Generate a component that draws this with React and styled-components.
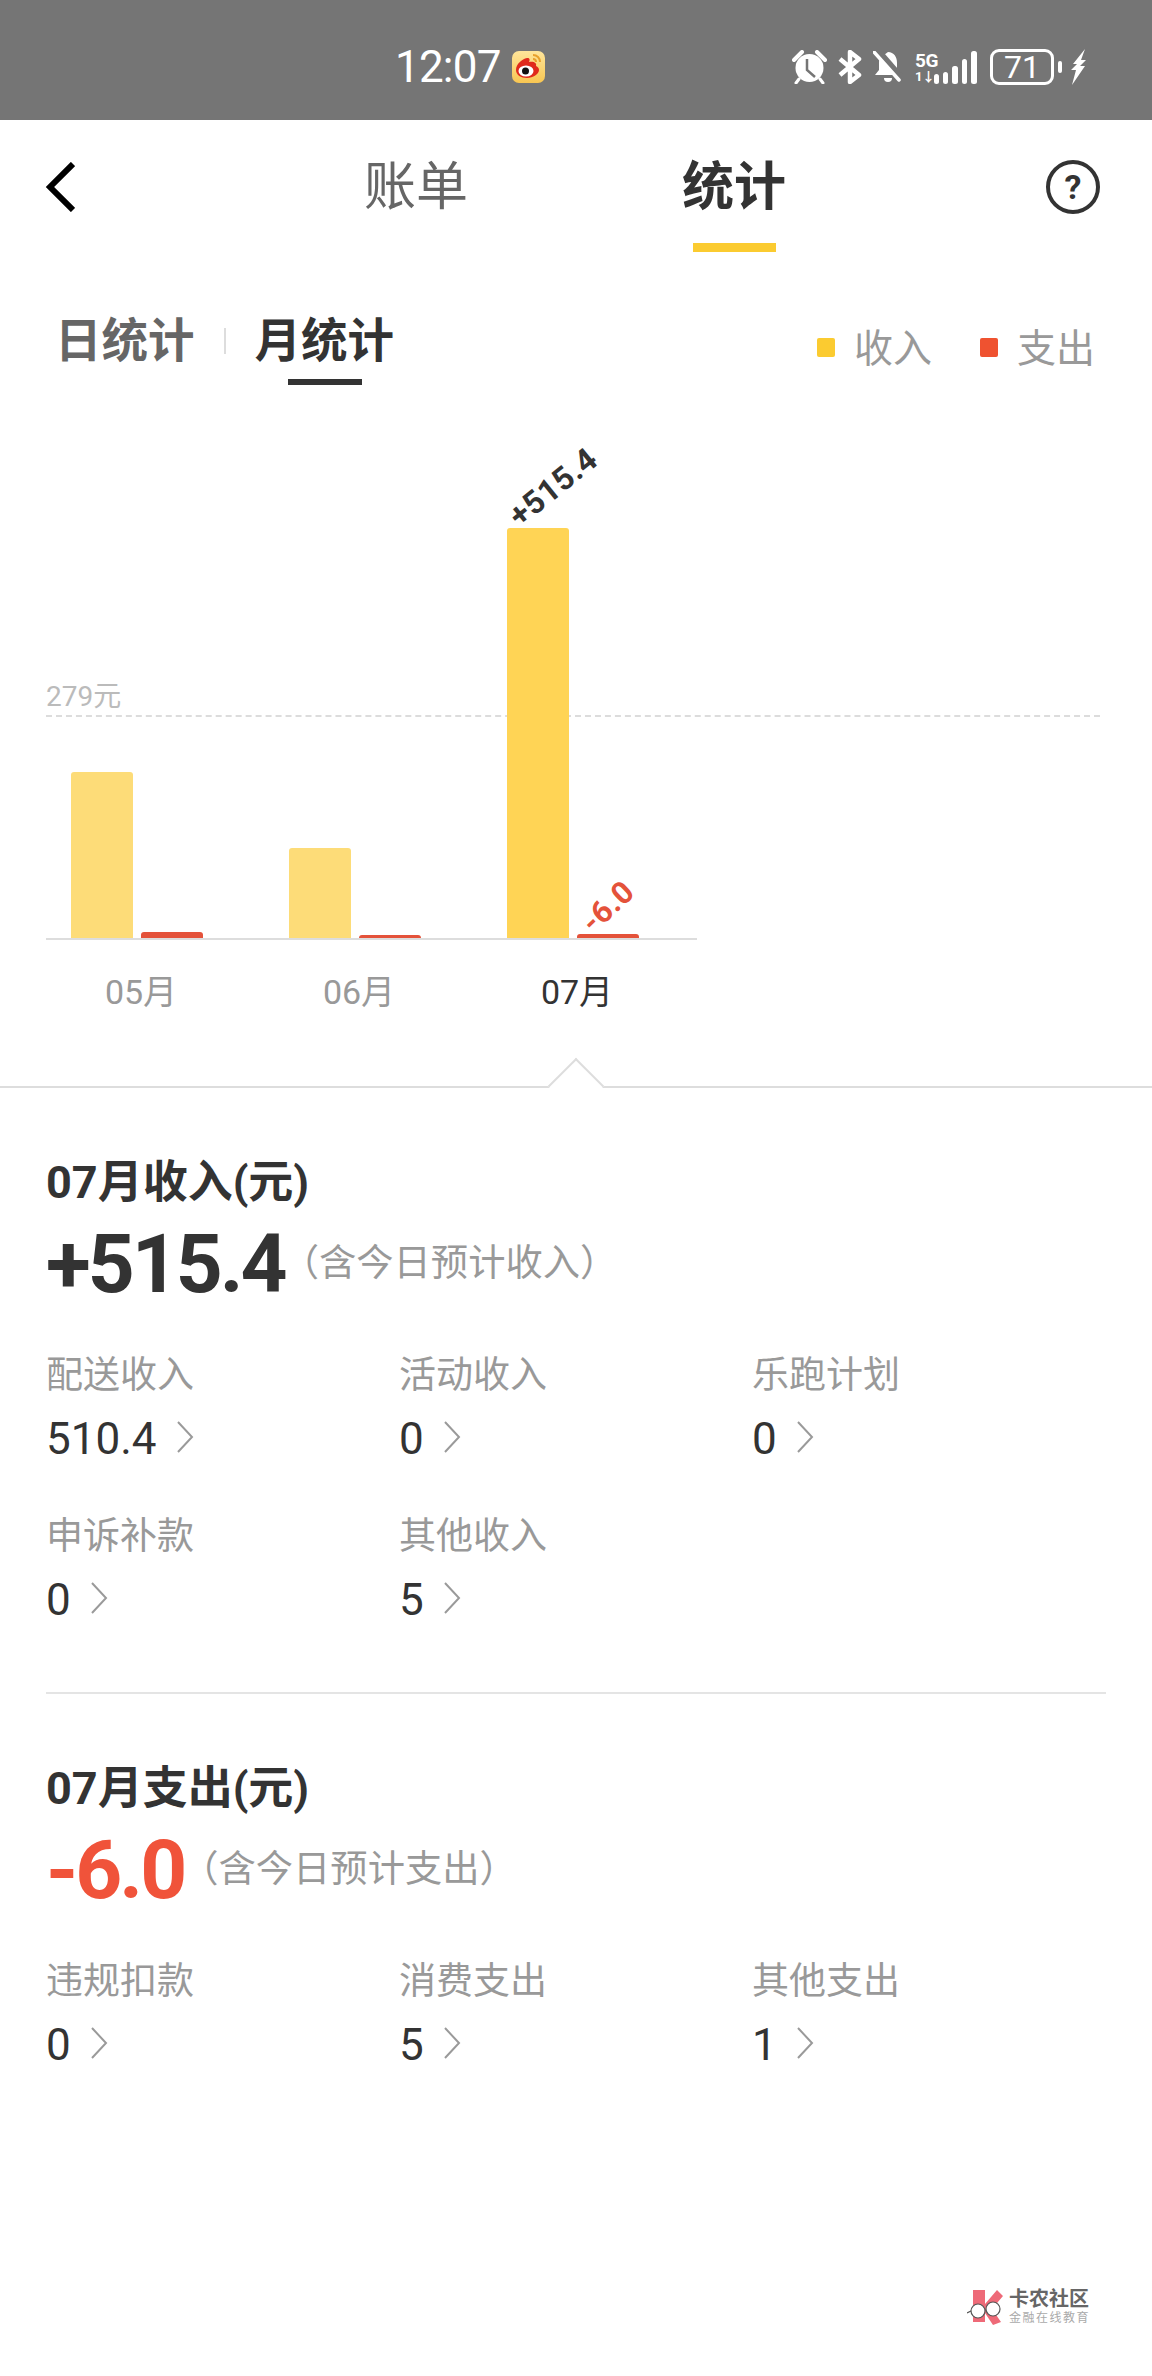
import styled, { createGlobalStyle } from "styled-components";

const GlobalStyle = createGlobalStyle`
  html, body {
    margin: 0;
    padding: 0;
    background: #fff;
  }
  body {
    font-family: Roboto, "Noto Sans CJK SC", sans-serif;
    color: #333;
  }
`;

const months = [
  { name: "05月", income: 166, expense: 6 },
  { name: "06月", income: 90, expense: 3 },
  { name: "07月", income: 410, expense: 4, active: true },
];

const incomeItems = [
  { label: "配送收入", value: "510.4" },
  { label: "活动收入", value: "0" },
  { label: "乐跑计划", value: "0" },
  { label: "申诉补款", value: "0" },
  { label: "其他收入", value: "5" },
];

const expenseItems = [
  { label: "违规扣款", value: "0" },
  { label: "消费支出", value: "5" },
  { label: "其他支出", value: "1" },
];

const Arrow = () => (
  <ArrowIcon viewBox="0 0 18 34" fill="none" stroke="#9a9a9a" strokeWidth="2">
    <path d="M2 2l14 15L2 32" />
  </ArrowIcon>
);

const Stats = ({ items }) => (
  <StatGrid>
    {items.map((item) => (
      <div key={item.label}>
        <StatLabel>{item.label}</StatLabel>
        <StatValue>
          {item.value}
          <Arrow />
        </StatValue>
      </div>
    ))}
  </StatGrid>
);

const StatusIcons = () => (
  <StatusRight>
    {/* alarm */}
    <svg width="35" height="34" viewBox="0 0 35 34" fill="#fff">
      <circle cx="17.5" cy="18" r="14" />
      <path d="M2 10L10 2" fill="none" stroke="#fff" strokeWidth="4" strokeLinecap="round" />
      <path d="M33 10L25 2" fill="none" stroke="#fff" strokeWidth="4" strokeLinecap="round" />
      <path d="M7 29l-3 4M28 29l3 4" stroke="#fff" strokeWidth="3" strokeLinecap="round" />
      <path d="M15 9v11l8 7" fill="none" stroke="#757575" strokeWidth="2.5" />
    </svg>
    {/* bluetooth */}
    <svg width="26" height="34" viewBox="0 0 26 34" fill="none" stroke="#fff">
      <path d="M3 9l19 16-9 7V2l9 7L3 25" strokeWidth="4.5" strokeLinejoin="round" />
    </svg>
    {/* bell off */}
    <svg width="30" height="32" viewBox="0 0 30 32" fill="#fff">
      <path d="M15 1c6 0 9 5 9 11v7l4 5H2l4-5v-7c0-2 0-3 1-5z" />
      <path d="M11 27h8a4 4 0 0 1-8 0z" />
      <path d="M3 -2l26 30" stroke="#757575" strokeWidth="7" />
      <path d="M1 1l25 28" stroke="#fff" strokeWidth="3.5" strokeLinecap="round" />
    </svg>
    <SignalBox>
      <NetText>
        <span>5G</span>
        <small>1↓</small>
      </NetText>
      <svg width="43" height="33" viewBox="0 0 43 33" fill="#fff">
        <rect x="0" y="23" width="5" height="10" rx="2.5" />
        <rect x="9" y="21" width="5" height="12" rx="2.5" />
        <rect x="18" y="15" width="6" height="18" rx="2.5" />
        <rect x="28" y="8" width="5" height="25" rx="2.5" />
        <rect x="37" y="0" width="6" height="33" rx="2.5" />
      </svg>
    </SignalBox>
    <Battery>71</Battery>
    <BatteryTip />
    {/* charging bolt */}
    <BoltIcon width="18" height="36" viewBox="0 0 18 36" fill="#fff">
      <path d="M16 0L4 15h4l-6 6h5L3 36l13-19h-5l6-6h-5z" />
    </BoltIcon>
  </StatusRight>
);

const WeiboIcon = () => (
  <svg width="33" height="32" viewBox="0 0 33 32">
    <defs>
      <linearGradient id="weiboBg" x1="0" y1="0" x2="0" y2="1">
        <stop offset="0" stopColor="#ffe59a" />
        <stop offset="1" stopColor="#f8c652" />
      </linearGradient>
    </defs>
    <rect width="33" height="32" rx="7" fill="url(#weiboBg)" />
    <path d="M4 19c0-6 6-11 11-12 3-.5 3 2 2 4 5-1 8 1 7 4 2 1 3 2 3 4 0 4-6 8-12 8S4 24 4 19z" fill="#e02a1c" />
    <ellipse cx="14" cy="20" rx="7.5" ry="5.5" fill="#fff" />
    <circle cx="13.5" cy="20" r="3.5" fill="#111" />
    <path d="M21 4c4 0 7 3 7 7M21 8c2 0 3 1 3 3" fill="none" stroke="#e8a02c" strokeWidth="2" />
  </svg>
);

const BrandLogo = () => (
  <svg width="38" height="38" viewBox="0 0 38 38">
    <path d="M6 2h12v14L30 2l6 6-11 13 9 13-8 3-8-12v9H6z" fill="#ee6a78" />
    <circle cx="11" cy="23" r="7" fill="#fff" stroke="#555" strokeWidth="1.2" />
    <circle cx="26" cy="21" r="7" fill="#fff" stroke="#555" strokeWidth="1.2" />
    <path d="M0 25l4-2M18 22h1" stroke="#555" strokeWidth="1.2" />
  </svg>
);

const App = () => {
  return (
    <Page>
      <GlobalStyle />
      <StatusBar>
        <StatusCenter>
          <Clock>12:07</Clock>
          <WeiboIcon />
        </StatusCenter>
        <StatusIcons />
      </StatusBar>

      <Nav>
        <svg width="30" height="50" viewBox="0 0 30 50" fill="none" stroke="#000" strokeWidth="6">
          <path d="M28 2L5 25l23 23" />
        </svg>
        <NavTabs>
          <NavTab>账单</NavTab>
          <NavTab $active>统计</NavTab>
        </NavTabs>
        <HelpBtn>?</HelpBtn>
      </Nav>

      <FilterRow>
        <SubTab>日统计</SubTab>
        <SubDivider />
        <SubTab $active>月统计</SubTab>
        <Legend>
          <LegendItem>
            <LegendDot $color="#fbcb30" />
            收入
          </LegendItem>
          <LegendItem>
            <LegendDot $color="#ef5230" />
            支出
          </LegendItem>
        </Legend>
      </FilterRow>

      <Chart>
        <Plot>
          <AvgLabel>279元</AvgLabel>
          <AvgLine />
          {months.map((m) => (
            <MonthGroup key={m.name}>
              <BarRow>
                <IncomeBar $h={m.income} $active={m.active}>
                  {m.active && <TopValue>+515.4</TopValue>}
                </IncomeBar>
                <ExpenseBar $h={m.expense}>
                  {m.active && <TopValueRed>-6.0</TopValueRed>}
                </ExpenseBar>
              </BarRow>
              <MonthLabel $active={m.active}>{m.name}</MonthLabel>
            </MonthGroup>
          ))}
        </Plot>
        <Caret />
      </Chart>

      <Section>
        <SectionTitle>07月收入(元)</SectionTitle>
        <AmountRow>
          <Amount>+515.4</Amount>
          <AmountNote>（含今日预计收入）</AmountNote>
        </AmountRow>
        <Stats items={incomeItems} />
      </Section>
      <Divider />
      <Section>
        <SectionTitle>07月支出(元)</SectionTitle>
        <AmountRow>
          <Amount $red>-6.0</Amount>
          <AmountNote>（含今日预计支出）</AmountNote>
        </AmountRow>
        <Stats items={expenseItems} />
      </Section>

      <Watermark>
        <BrandLogo />
        <div>
          <BrandName>卡农社区</BrandName>
          <BrandSub>金融在线教育</BrandSub>
        </div>
      </Watermark>
    </Page>
  );
};

export default App;

const Page = styled.div`
  position: relative;
  width: 1152px;
  height: 2376px;
  overflow: hidden;
  background: #fff;
`;

const StatusBar = styled.div`
  height: 120px;
  background: #757575;
  display: flex;
  align-items: center;
  padding: 14px 65px 0 395px;
  box-sizing: border-box;
  justify-content: space-between;
`;

const StatusCenter = styled.div`
  display: flex;
  align-items: center;
  gap: 11px;
`;

const Clock = styled.span`
  font-size: 44px;
  line-height: 52px;
  color: #fff;
  letter-spacing: -0.8px;
`;

const StatusRight = styled.div`
  display: flex;
  align-items: center;
  gap: 10px;
`;

const SignalBox = styled.div`
  display: flex;
  align-items: flex-end;
  margin-left: 2px;
`;

const NetText = styled.div`
  display: flex;
  flex-direction: column;
  width: 19px;
  white-space: nowrap;
  color: #fff;
  font-size: 19px;
  font-weight: 700;
  letter-spacing: -0.5px;
  line-height: 19px;
  small {
    font-size: 13px;
    line-height: 14px;
    font-weight: 700;
  }
`;

const Battery = styled.div`
  width: 64px;
  height: 36px;
  margin-left: 3px;
  box-sizing: border-box;
  border: 3px solid #fff;
  border-radius: 9px;
  color: #fff;
  font-size: 32px;
  line-height: 30px;
  text-align: center;
`;

const BatteryTip = styled.div`
  width: 4px;
  height: 12px;
  margin-left: -6px;
  background: #fff;
  border-radius: 2px;
`;

const BoltIcon = styled.svg`
  margin-left: -3px;
`;

const Nav = styled.div`
  height: 134px;
  display: flex;
  align-items: center;
  padding: 0 52px 0 45px;
`;

const NavTabs = styled.div`
  display: flex;
  gap: 214px;
  margin-left: 289px;
`;

const NavTab = styled.div`
  position: relative;
  font-size: 52px;
  line-height: 136px;
  height: 134px;
  font-weight: ${(p) => (p.$active ? 700 : 400)};
  color: ${(p) => (p.$active ? "#333" : "#666")};
  &::after {
    content: "";
    display: ${(p) => (p.$active ? "block" : "none")};
    position: absolute;
    left: 11px;
    right: 10px;
    bottom: 2px;
    height: 9px;
    background: #fbcb30;
  }
`;

const HelpBtn = styled.div`
  margin-left: auto;
  width: 54px;
  height: 54px;
  box-sizing: border-box;
  border: 4px solid #333;
  border-radius: 50%;
  text-align: center;
  font-size: 34px;
  font-weight: 700;
  line-height: 46px;
  color: #333;
`;

const FilterRow = styled.div`
  height: 174px;
  display: flex;
  align-items: center;
  padding: 0 57px 0 55px;
`;

const SubTab = styled.div`
  position: relative;
  font-size: 46.5px;
  font-weight: 700;
  line-height: 60px;
  color: ${(p) => (p.$active ? "#333" : "#666")};
  &::after {
    content: "";
    display: ${(p) => (p.$active ? "block" : "none")};
    position: absolute;
    left: 33px;
    width: 74px;
    bottom: -14px;
    height: 6px;
    background: #333;
  }
`;

const SubDivider = styled.div`
  width: 2px;
  height: 26px;
  margin: 0 29px;
  background: #ddd;
`;

const Legend = styled.div`
  margin-left: auto;
  margin-top: 16px;
  display: flex;
  gap: 48px;
`;

const LegendItem = styled.div`
  display: flex;
  align-items: center;
  gap: 19px;
  font-size: 39px;
  line-height: 50px;
  color: #999;
`;

const LegendDot = styled.span`
  width: 18px;
  height: 19px;
  border-radius: 2px;
  margin-top: -4px;
  background: ${(p) => p.$color};
`;

const Chart = styled.div`
  position: relative;
  height: 660px;
  box-sizing: border-box;
  padding: 0 52px 0 46px;
  border-bottom: 2px solid #ddd;
`;

const Plot = styled.div`
  position: relative;
  display: flex;
`;

const AvgLabel = styled.div`
  position: absolute;
  top: 251px;
  left: 0;
  font-size: 28px;
  line-height: 36px;
  color: #bbb;
`;

const AvgLine = styled.div`
  position: absolute;
  top: 287px;
  left: 0;
  right: 0;
  border-top: 2px dashed #dcdcdc;
`;

const MonthGroup = styled.div`
  width: 218px;
  &:last-child {
    width: 215px;
  }
`;

const BarRow = styled.div`
  height: 510px;
  display: flex;
  align-items: flex-end;
  gap: 8px;
  padding-left: 25px;
  border-bottom: 2px solid #ddd;
`;

const IncomeBar = styled.div`
  position: relative;
  width: 62px;
  height: ${(p) => p.$h}px;
  border-radius: 3px 3px 0 0;
  background: ${(p) => (p.$active ? "#ffd455" : "#fddc78")};
`;

const ExpenseBar = styled.div`
  position: relative;
  width: 62px;
  height: ${(p) => p.$h}px;
  border-radius: 3px 3px 0 0;
  background: #e4523a;
`;

const TopValue = styled.span`
  position: absolute;
  left: 50%;
  bottom: 100%;
  white-space: nowrap;
  font-size: 32px;
  font-weight: 700;
  line-height: 40px;
  letter-spacing: 0.5px;
  color: #333;
  transform: translate(-50%, 50%) translate(15px, -41px) rotate(-39deg);
`;

const TopValueRed = styled(TopValue)`
  font-size: 31px;
  letter-spacing: 0.5px;
  color: #e4523a;
  transform: translate(-50%, 50%) translate(0, -27px) rotate(-43deg);
`;

const MonthLabel = styled.div`
  width: 132px;
  margin: 23px 0 0 29px;
  text-align: center;
  font-size: 34px;
  line-height: 58px;
  color: ${(p) => (p.$active ? "#333" : "#999")};
`;

const Caret = styled.div`
  position: absolute;
  left: 576px;
  bottom: -20px;
  width: 38px;
  height: 38px;
  background: #fff;
  border-left: 2px solid #ddd;
  border-top: 2px solid #ddd;
  transform: translateX(-50%) rotate(45deg);
`;

const Section = styled.section`
  padding: 65px 46px 0;
`;

const SectionTitle = styled.div`
  font-size: 45px;
  font-weight: 700;
  line-height: 60px;
  color: #333;
`;

const AmountRow = styled.div`
  display: flex;
  align-items: center;
  height: 96px;
  margin-top: 3px;
`;

const Amount = styled.span`
  font-size: 82px;
  font-weight: 700;
  letter-spacing: -3px;
  line-height: 96px;
  color: ${(p) => (p.$red ? "#f0533a" : "#333")};
`;

const AmountNote = styled.span`
  font-size: 37.3px;
  line-height: 50px;
  color: #999;
  margin-left: -3px;
  margin-top: -2px;
`;

const StatGrid = styled.div`
  display: grid;
  grid-template-columns: 353px 353px 1fr;
  row-gap: 45px;
  margin-top: 39px;
`;

const StatLabel = styled.div`
  font-size: 37px;
  line-height: 50px;
  color: #999;
`;

const StatValue = styled.div`
  display: flex;
  align-items: center;
  gap: 19px;
  margin-top: 10px;
  font-size: 44px;
  line-height: 56px;
  color: #333;
`;

const ArrowIcon = styled.svg`
  width: 18px;
  height: 34px;
  margin-top: -4px;
`;

const Divider = styled.div`
  height: 2px;
  margin: 64px 46px 0;
  background: #e4e4e4;
`;

const Watermark = styled.div`
  position: absolute;
  right: 62px;
  bottom: 50px;
  display: flex;
  align-items: center;
  gap: 4px;
`;

const BrandName = styled.div`
  font-size: 20px;
  line-height: 22px;
  font-weight: 700;
  color: #666;
`;

const BrandSub = styled.div`
  font-size: 12px;
  line-height: 16px;
  letter-spacing: 1.5px;
  color: #aaa;
`;
